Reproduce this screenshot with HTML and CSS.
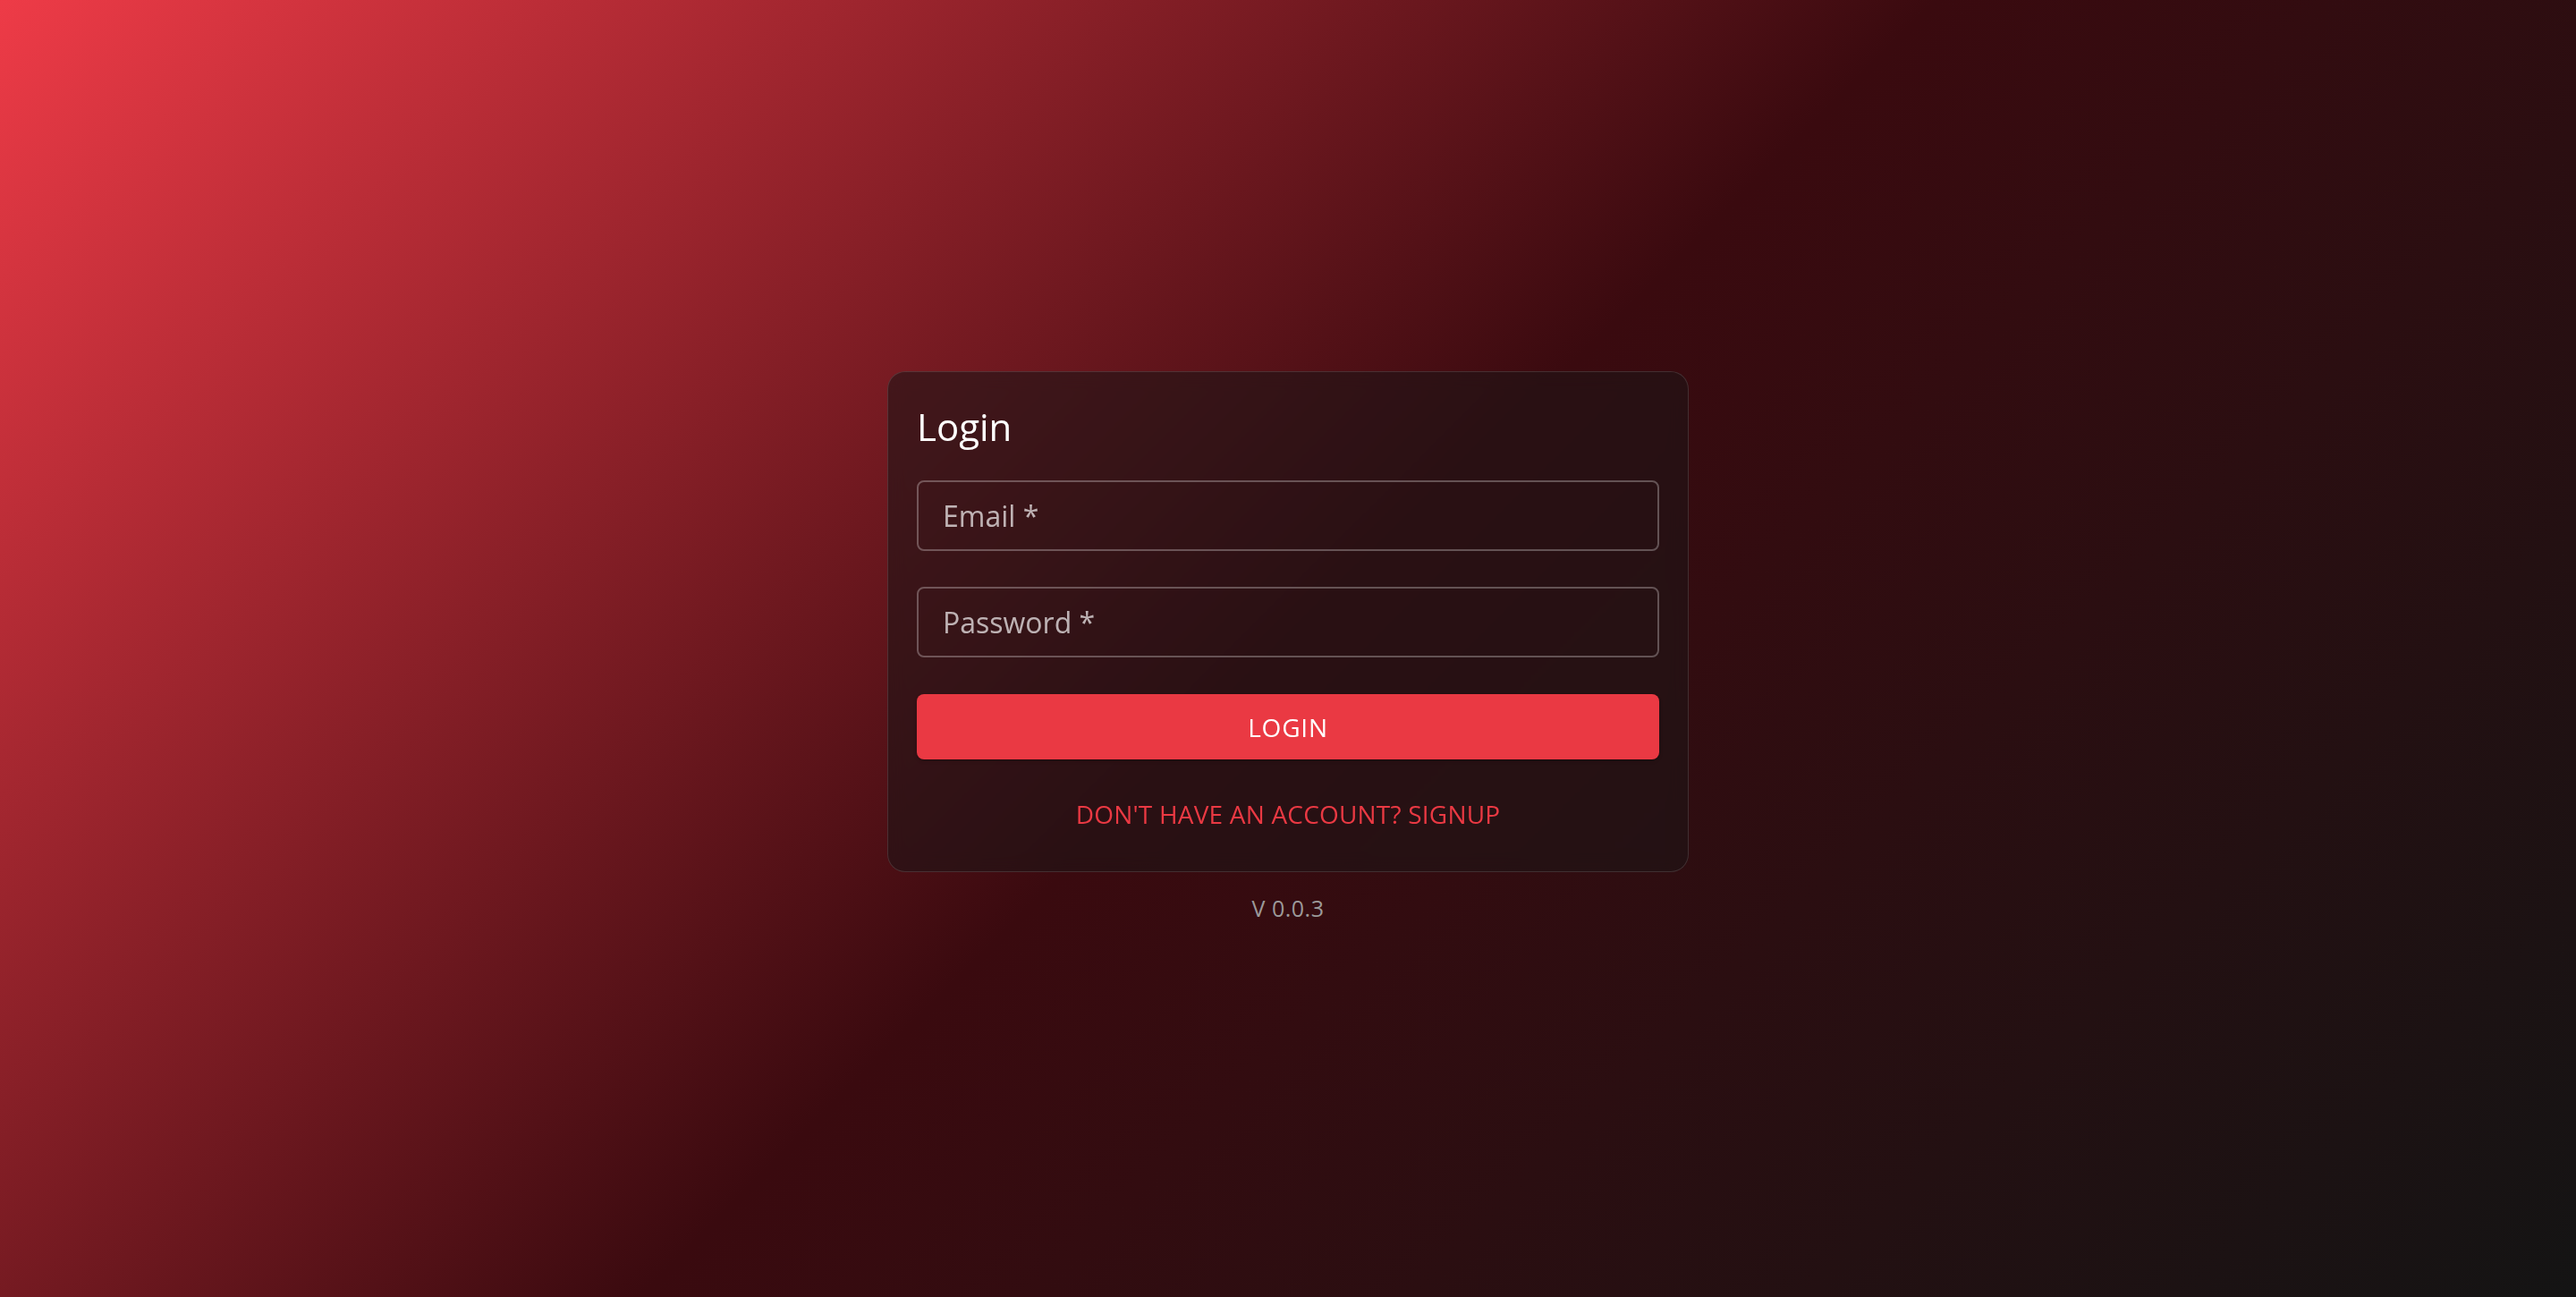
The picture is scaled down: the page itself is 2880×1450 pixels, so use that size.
FILE: index.html
```html
<!DOCTYPE html>
<html lang="en">
<head>
    <meta charset="UTF-8">
    <title>Login</title>
    <link rel="stylesheet" href="styles.css">
</head>
<body>
    <main class="page">
        <form class="login-card" onsubmit="return false">
            <h1 class="login-title">Login</h1>
            <input class="field" type="email" placeholder="Email *">
            <input class="field field-password" type="password" placeholder="Password *">
            <button class="btn-login" type="submit">Login</button>
            <a href="#" class="link-signup">Don't have an account? Signup</a>
        </form>
        <p class="version">V 0.0.3</p>
    </main>
</body>
</html>
```

FILE: styles.css
```css
* {
    margin: 0;
    padding: 0;
    box-sizing: border-box;
    font-family: 'Open Sans', 'DejaVu Sans', sans-serif;
}

body {
    min-height: 100vh;
    color: #fff;
    background: linear-gradient(135deg, #ee3b47 0%, #3a0a0f 50%, #141414 100%);
    overflow: hidden;
}

.page {
    min-height: 100vh;
    display: flex;
    flex-direction: column;
    justify-content: center;
    align-items: center;
}

.login-card {
    width: 896px;
    display: flex;
    flex-direction: column;
    padding: 29px 32px 28px;
    background: rgba(30, 20, 22, 0.58);
    border: 1px solid rgba(255, 255, 255, 0.13);
    border-radius: 20px;
    backdrop-filter: blur(10px);
}

.login-title {
    font-size: 42px;
    font-weight: 500;
    line-height: 64px;
    margin-bottom: 28px;
}

.field {
    height: 79px;
    width: 100%;
    padding: 0 27px;
    background: transparent;
    border: 2px solid rgba(255, 255, 255, 0.28);
    border-radius: 8px;
    color: #fff;
    font-size: 32px;
    outline: none;
}

.field::placeholder {
    color: rgba(255, 255, 255, 0.68);
}

.field-password {
    margin-top: 40px;
}

.btn-login {
    margin-top: 41px;
    height: 73px;
    border: none;
    border-radius: 8px;
    background: #ea3943;
    color: #fff;
    font-size: 28px;
    font-weight: 500;
    letter-spacing: 0.8px;
    text-transform: uppercase;
    box-shadow: 0 3px 2px -2px rgba(0, 0, 0, 0.2), 0 2px 4px rgba(0, 0, 0, 0.14);
    cursor: pointer;
}

.link-signup {
    margin-top: 24px;
    height: 73px;
    display: flex;
    align-items: center;
    justify-content: center;
    color: #ea3943;
    font-size: 28px;
    font-weight: 500;
    letter-spacing: 0.2px;
    text-transform: uppercase;
    text-decoration: none;
}

.version {
    margin-top: 20px;
    line-height: 40px;
    font-size: 25px;
    color: #9c9a9a;
    letter-spacing: 0.5px;
}
```
